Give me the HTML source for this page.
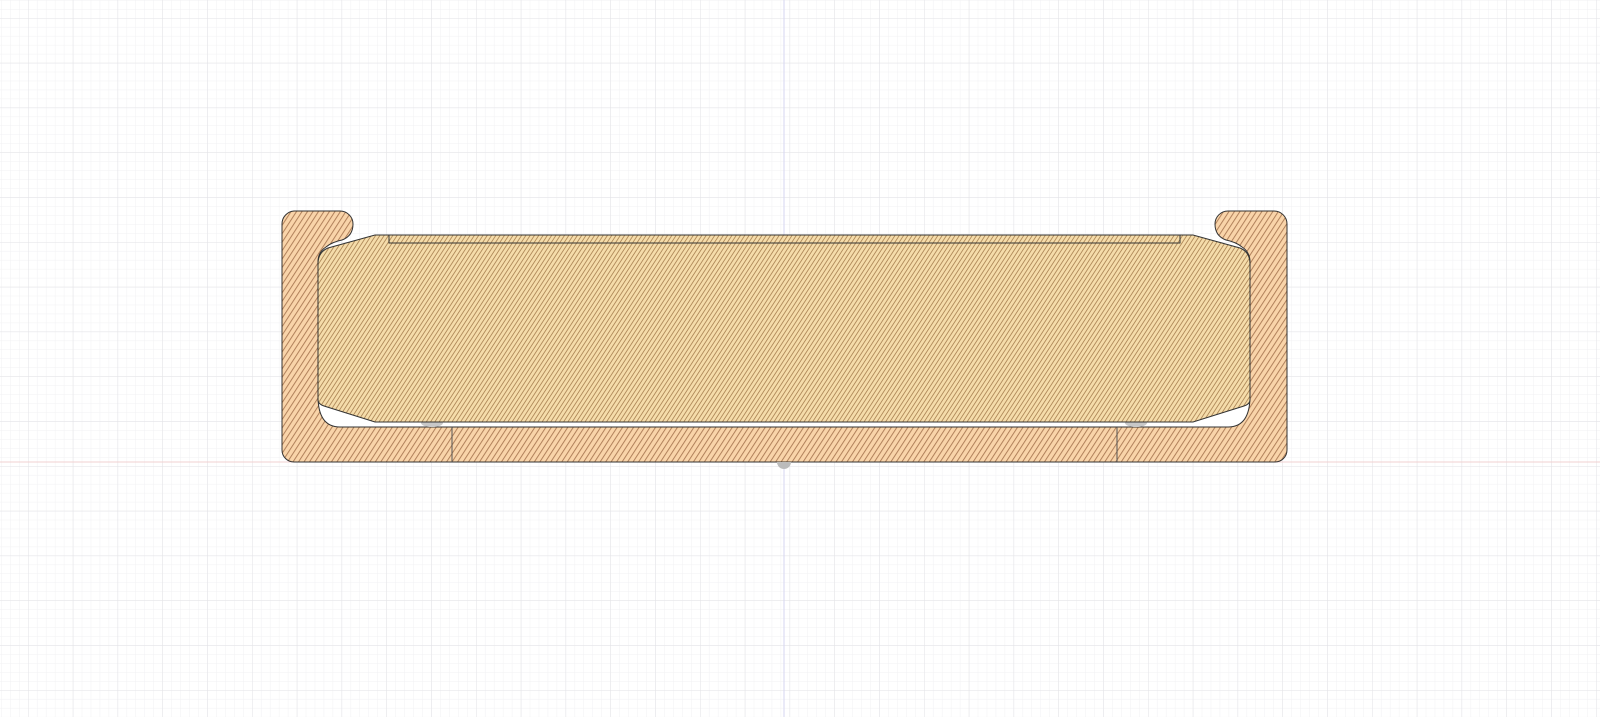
<!DOCTYPE html>
<html><head><style>html,body{margin:0;padding:0;background:#fff;}svg{display:block}</style></head>
<body>
<svg width="1600" height="717" viewBox="0 0 1600 717" xmlns="http://www.w3.org/2000/svg">
<defs>
<pattern id="minor" x="28" y="18" width="8.96" height="8.96" patternUnits="userSpaceOnUse">
<path d="M0 0V8.96M0 0H8.96" stroke="#f1f1f3" stroke-width="1" fill="none"/>
</pattern>
<pattern id="major" x="28" y="18" width="44.8" height="44.8" patternUnits="userSpaceOnUse">
<path d="M0 0V44.8M0 0H44.8" stroke="#e2e2e6" stroke-width="1" fill="none"/>
</pattern>
<pattern id="hf" width="4.6" height="4.6" patternUnits="userSpaceOnUse" patternTransform="rotate(33)">
<rect width="4.6" height="4.6" fill="#f9d4a9"/>
<rect width="1" height="4.6" fill="#b0805a"/>
</pattern>
<pattern id="ht" width="3.6" height="3.6" patternUnits="userSpaceOnUse" patternTransform="rotate(33)">
<rect width="3.6" height="3.6" fill="#f5dcaa"/>
<rect width="0.9" height="3.6" fill="#b08a5a"/>
</pattern>
</defs>
<rect width="1600" height="717" fill="#fff"/>
<rect width="1600" height="717" fill="url(#minor)"/>
<rect width="1600" height="717" fill="url(#major)"/>
<line x1="784" y1="0" x2="784" y2="717" stroke="#d6d6f0" stroke-width="1"/>
<line x1="0" y1="462" x2="1600" y2="462" stroke="#f2d0d0" stroke-width="1"/>
<!-- white cavity bottom -->
<path d="M318 370 V396 Q318 427 340 427 H1228 Q1250 427 1250 396 V370 Z" fill="#fff"/>
<!-- frame -->
<path d="M294 211 H340 A13 13 0 0 1 353 224 Q353 236 342 240 Q332 242 326 247 Q318 252 318 262 V396 Q318 427 340 427 H1228 Q1250 427 1250 396 V262 Q1250 252 1242 247 Q1236 242 1226 240 Q1215 236 1215 224 A13 13 0 0 1 1228 211 H1274 A13 13 0 0 1 1287 224 V450 A12 12 0 0 1 1275 462 H294 A12 12 0 0 1 282 450 V224 A13 13 0 0 1 294 211 Z" fill="url(#hf)" stroke="#333" stroke-width="1"/>
<line x1="452" y1="427" x2="452" y2="462" stroke="#555" stroke-width="1"/>
<line x1="1117" y1="427" x2="1117" y2="462" stroke="#555" stroke-width="1"/>
<ellipse cx="432" cy="423" rx="11" ry="4" fill="#c8c8c8"/>
<ellipse cx="1136" cy="423" rx="11" ry="4" fill="#c8c8c8"/>
<!-- tray -->
<path d="M375 235 H1193 L1240 248 Q1250 252 1250 264 V400 Q1250 404 1244 406 L1193 422 H375 L324 406 Q318 404 318 400 V264 Q318 252 328 248 Z" fill="url(#ht)" stroke="#333" stroke-width="1"/>
<path d="M389 235 V243 H1180 V235" fill="none" stroke="#333" stroke-width="1"/>
<path d="M777 462 A7 7 0 0 0 791 462" fill="#bbb"/>
</svg>
</body></html>
